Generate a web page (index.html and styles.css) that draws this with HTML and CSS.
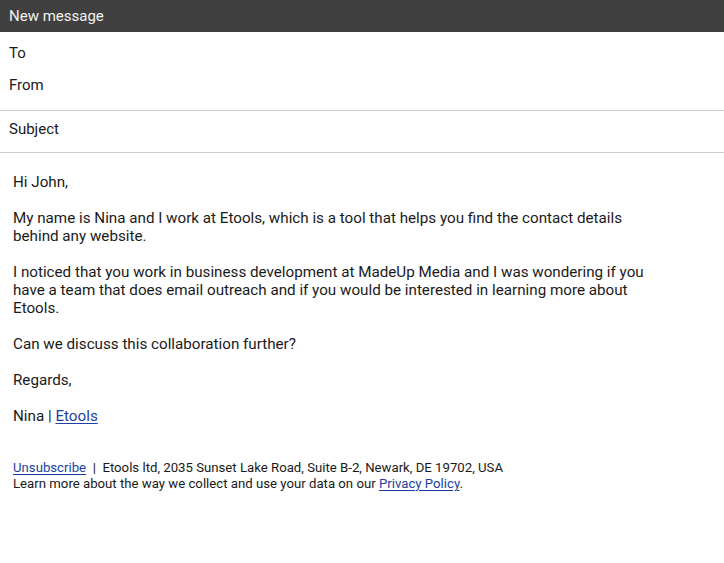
FILE: index.html
```html
<!DOCTYPE html>
<html>
<head>
<meta charset="utf-8">
<link rel="stylesheet" href="styles.css">
</head>
<body>
<div class="compose">
  <div class="titlebar">New message</div>
  <div class="recips">
    <div class="field">To</div>
    <div class="field">From</div>
  </div>
  <div class="subject"><div class="field">Subject</div></div>
  <div class="body">
    <p>Hi John,</p>
    <p>My name is Nina and I work at Etools, which is a tool that helps you find the contact details behind any website.</p>
    <p>I noticed that you work in business development at MadeUp Media and I was wondering if you have a team that does email outreach and if you would be interested in learning more about Etools.</p>
    <p>Can we discuss this collaboration further?</p>
    <p>Regards,</p>
    <p>Nina | <a href="#">Etools</a></p>
    <div class="footer">
      <div><a href="#">Unsubscribe</a>&nbsp; | &nbsp;Etools ltd, 2035 Sunset Lake Road, Suite B-2, Newark, DE 19702, USA</div>
      <div>Learn more about the way we collect and use your data on our <a href="#">Privacy Policy</a>.</div>
    </div>
  </div>
</div>
</body>
</html>
```

FILE: styles.css
```css
html, body {
  margin: 0;
  padding: 0;
  background: #fff;
}
body {
  font-family: Roboto, "Liberation Sans", sans-serif;
  font-size: 15px;
  color: #1a1a1a;
}
.titlebar {
  height: 32px;
  background: #404040;
  color: #f2f2f2;
  line-height: 32px;
  padding-left: 9px;
  font-size: 15px;
}
.field {
  line-height: 18px;
  font-size: 15px;
}
.recips {
  padding: 12px 9px 16px;
  display: flex;
  flex-direction: column;
  gap: 14px;
  border-bottom: 1px solid #cfcfcf;
}
.subject {
  padding: 9px 9px 14px;
  border-bottom: 1px solid #cfcfcf;
}
.body {
  padding: 20px 13px 0;
  max-width: 640px;
  line-height: 18px;
  font-size: 15.2px;
}
.body p {
  margin: 0 0 18px;
}
a {
  color: #1c3fa3;
  text-decoration: underline;
  text-underline-offset: 2px;
}
.footer {
  margin-top: 35px;
  font-size: 13.2px;
  line-height: 16px;
}
```
